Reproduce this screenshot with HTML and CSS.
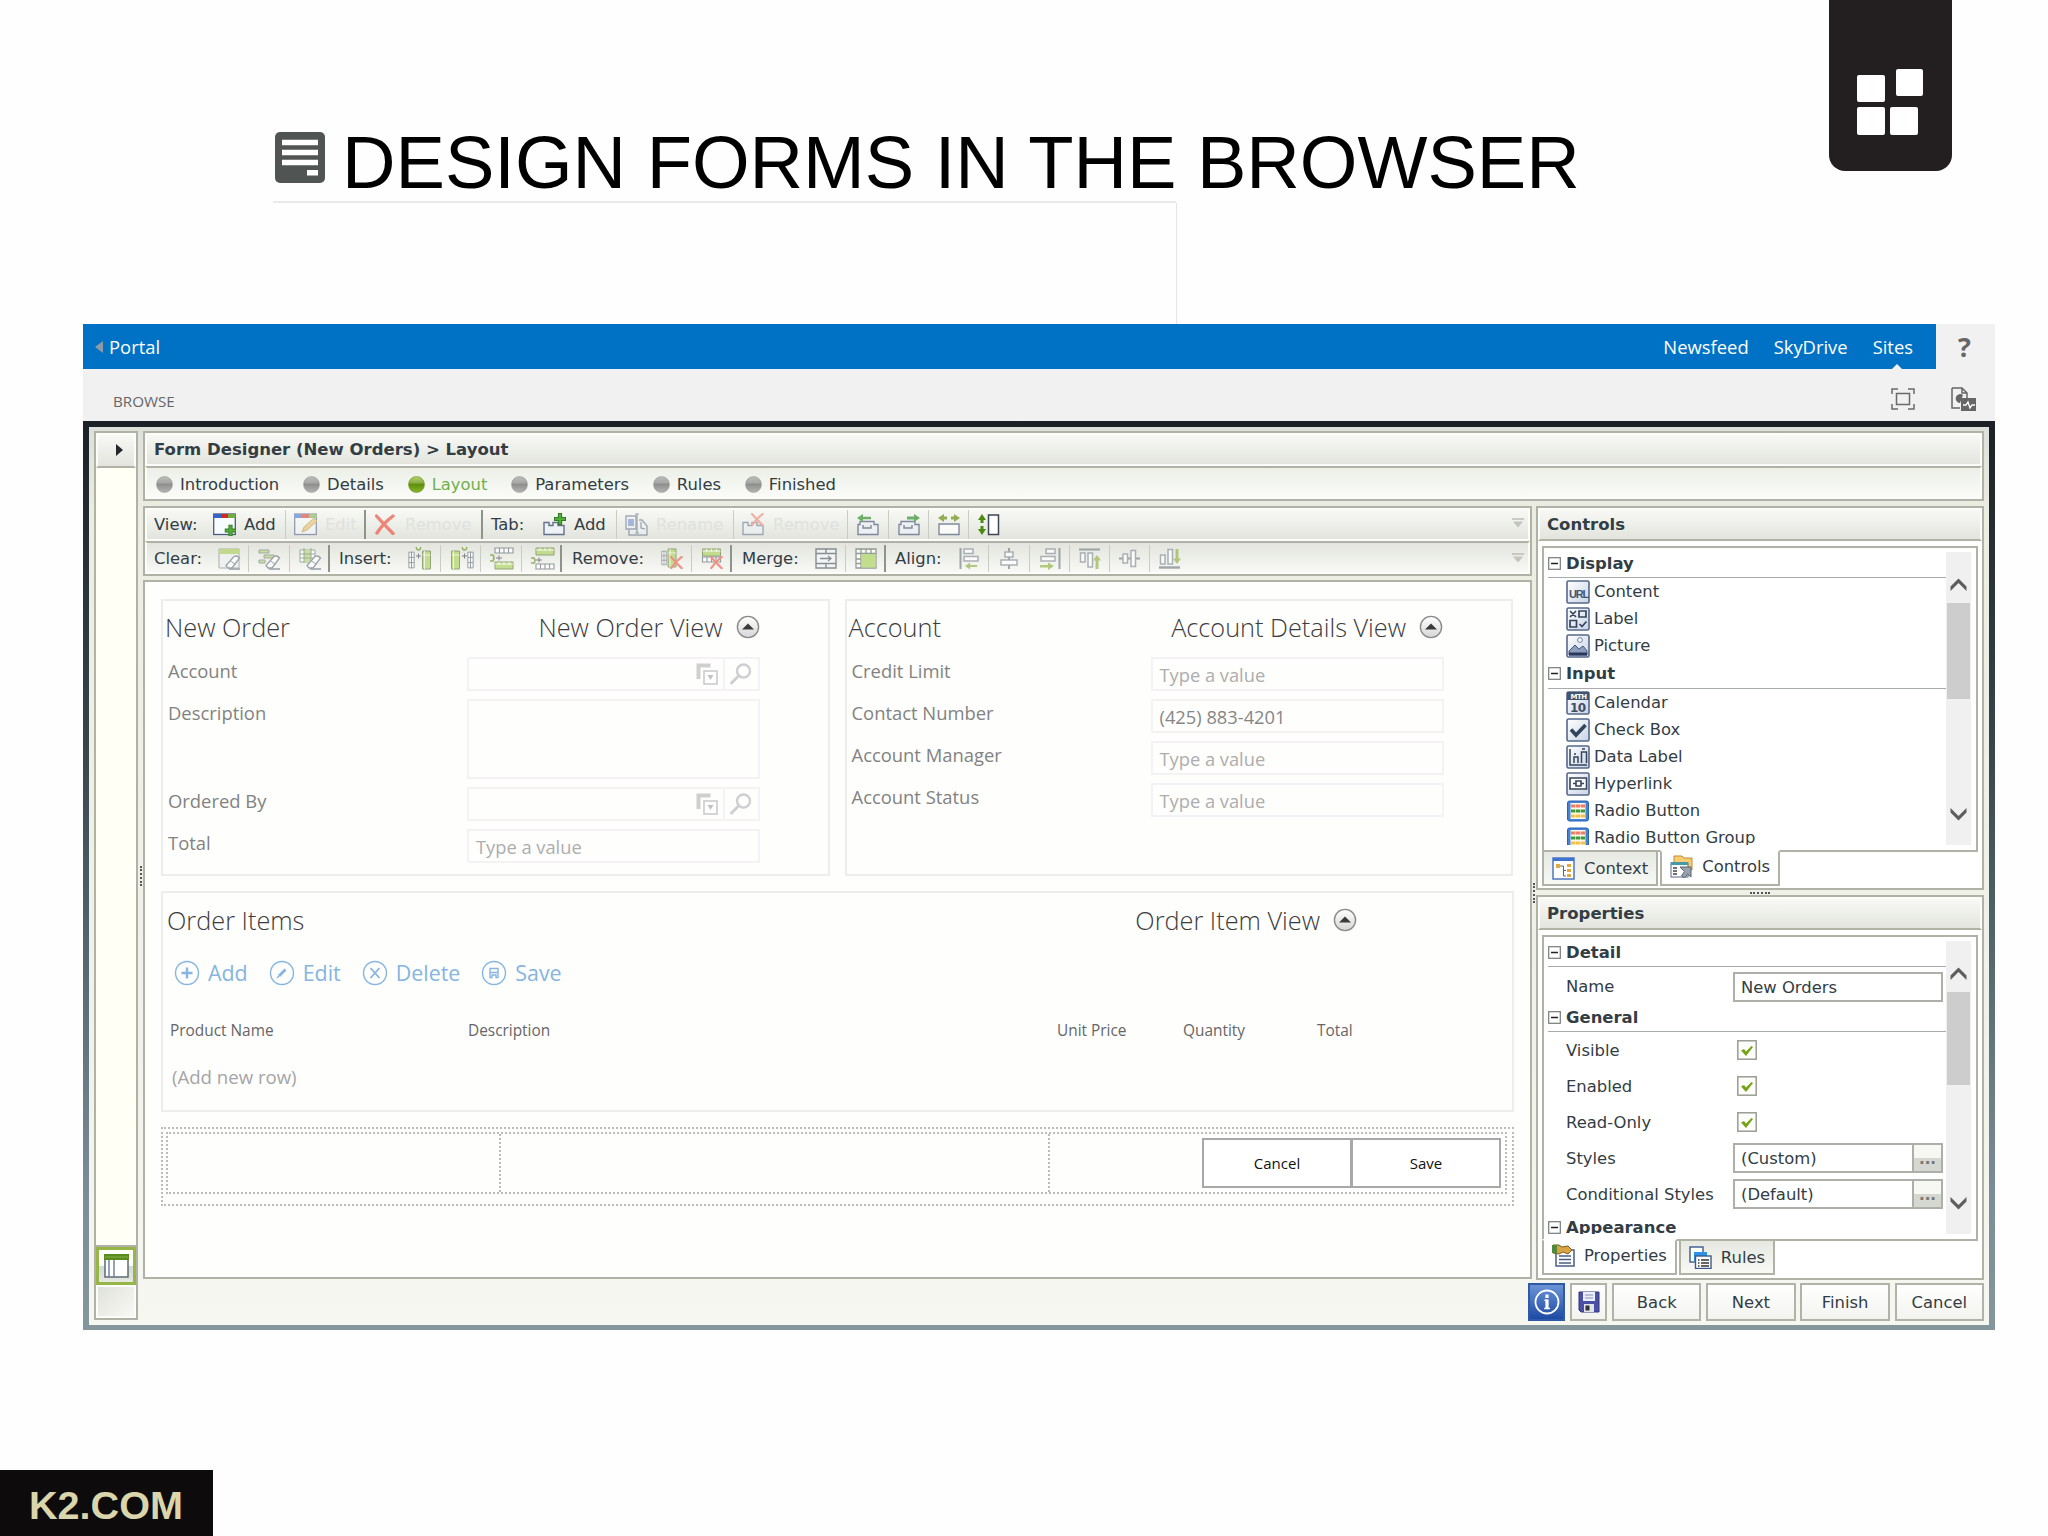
FILE: index.html
```
<!DOCTYPE html>
<html lang="en">
<head>
  <meta charset="UTF-8" />
  <meta name="viewport" content="width=device-width, initial-scale=1.0"/>
  <title>Design Forms in the Browser</title>
  <link rel="stylesheet" href="styles.css">
</head>
<body>
  <!-- shared icons -->
  <svg class="sprite" xmlns="http://www.w3.org/2000/svg">
    <defs>
      <linearGradient id="grey-ball" x1="0" y1="0" x2="0" y2="1"><stop offset="0" stop-color="#adadab"/><stop offset=".5" stop-color="#8f8f8d"/><stop offset="1" stop-color="#b4b4b2"/></linearGradient>
      <linearGradient id="green-ball" x1="0" y1="0" x2="0" y2="1"><stop offset="0" stop-color="#a3c54a"/><stop offset=".5" stop-color="#5f8f0c"/><stop offset="1" stop-color="#86b52c"/></linearGradient>
      <linearGradient id="round" x1="0" y1="0" x2="0" y2="1"><stop offset="0" stop-color="#fff"/><stop offset="1" stop-color="#d6d6d6"/></linearGradient>
      <linearGradient id="tile" x1="0" y1="0" x2="1" y2="1"><stop offset="0" stop-color="#fff"/><stop offset="1" stop-color="#c9d4e6"/></linearGradient>
    </defs>
    <symbol id="ball" viewBox="0 0 17 17"><circle cx="8.5" cy="8.5" r="8" fill="url(#grey-ball)" stroke="#a2a29f" stroke-width=".6"/><path d="M1.5 7.5a7 6.5 0 0 1 14 0z" fill="#fff" opacity=".18"/></symbol>
    <symbol id="ball-on" viewBox="0 0 17 17"><circle cx="8.5" cy="8.5" r="8" fill="url(#green-ball)" stroke="#6f9a20" stroke-width=".6"/><path d="M1.5 7.5a7 6.5 0 0 1 14 0z" fill="#fff" opacity=".2"/></symbol>
    <symbol id="collapse" viewBox="0 0 24 24"><circle cx="12" cy="12" r="10.6" fill="url(#round)" stroke="#8a8a8a" stroke-width="1.4"/><path d="M6 14.5l6-6 6 6z" fill="#3a3a3a"/></symbol>
    <symbol id="lookup" viewBox="0 0 22 22"><path d="M2.5 16V2.5h12" fill="none" stroke="#cfcfd1" stroke-width="4"/><rect x="8" y="8" width="13" height="13" fill="#fff" stroke="#cbcbcd" stroke-width="1.6"/><path d="M11.5 12h6l-3 5z" fill="#c2c2c4"/></symbol>
    <symbol id="search" viewBox="0 0 22 22"><circle cx="13.5" cy="8" r="6.5" fill="none" stroke="#cfcfd1" stroke-width="2.4"/><path d="M9 12.5L1.5 20" stroke="#cfcfd1" stroke-width="3" stroke-linecap="round"/></symbol>
    <symbol id="minus" viewBox="0 0 13 13"><rect x=".7" y=".7" width="11.6" height="11.6" fill="#fff" stroke="#777b7c" stroke-width="1.2"/><path d="M3 6.5h7" stroke="#222" stroke-width="1.5"/></symbol>
    <symbol id="arrow-up" viewBox="0 0 17 14"><path d="M.5 13V8.5L8.5 .5l8 8V13l-8-8z" fill="#5d5d5d"/></symbol>
    <symbol id="arrow-down" viewBox="0 0 17 14"><path d="M.5 1v4.500l8 8 8-8V1l-8 8z" fill="#5d5d5d"/></symbol>
    <symbol id="overflow" viewBox="0 0 12 10"><path d="M0 1h12" stroke="#bcbcb4" stroke-width="1.5"/><path d="M1 3.5h10L6 9.500z" fill="#c4c4bc"/></symbol>
    <symbol id="check" viewBox="0 0 20 20"><rect x=".8" y=".8" width="18.4" height="18.4" fill="#fdfdf9" stroke="#9a9d94" stroke-width="1.5"/><path d="M4 10.500l3-1.500 2 2.500 5.500-5.500 1.500 1-7 9z" fill="#74a31a"/></symbol>
    <symbol id="view" viewBox="0 0 23 23"><rect x=".7" y="1" width="21.6" height="20.5" fill="#f8fbff" stroke="#4a5a80" stroke-width="1.3"/><path d="M0 1h8v4H0z" fill="#3466c8"/><path d="M8 1h7v4H8z" fill="#d02c20"/><path d="M15 1h7.500v4H15z" fill="#6fae3c"/></symbol>
    <symbol id="tab" viewBox="0 0 23 23"><path d="M1 21.500V9.500h5v3h4v-3h5v3h6v9z" fill="#eef2f6" stroke="#66718a" stroke-width="1.4"/></symbol>
    <symbol id="tab-wide" viewBox="0 0 23 23"><path d="M1 21.500V11.500h2v-3h14v3h4v10zM6 12v3h8v-3" fill="#eef2f6" stroke="#66718a" stroke-width="1.4"/></symbol>
    <symbol id="eraser" viewBox="0 0 23 23"><path d="M8 18.500l8-9q3-1.500 5.500 1.500l-7.500 10H10z" fill="#fff" stroke="#87909a" stroke-width="1.3"/><path d="M12.500 14l5 3.500" stroke="#87909a"/><path d="M11 22h11" stroke="#87909a" stroke-width="1.6"/></symbol>
    <symbol id="plus-green" viewBox="0 0 12 12"><path d="M6 0v12M0 6h12" stroke="#2e7d22" stroke-width="4.2"/><path d="M6 1v10M1 6h10" stroke="#55ad3c" stroke-width="2.2"/></symbol>
    <symbol id="cross" viewBox="0 0 20 20"><path d="M1.500 1.500q7 8 16.500 17.500M18 1.500Q8 9 2 18.500" fill="none" stroke="#ee7b6c" stroke-width="3.4" stroke-linecap="round"/></symbol>
    <symbol id="cells-v" viewBox="0 0 8 20"><path d="M1 1h6v18H1zM1 7h6M1 13h6M4 1v18" fill="#fff" stroke="#7d858c" stroke-width="1.1"/></symbol>
    <symbol id="cells-h" viewBox="0 0 20 7"><path d="M1 1h18v5H1zM5.500 1v5M10 1v5M14.500 1v5" fill="#fff" stroke="#7d858c" stroke-width="1.1"/></symbol>
    <symbol id="bar-v" viewBox="0 0 10 20"><path d="M1 1h8v18H1z" fill="#b9d878" stroke="#7d9260"/><path d="M3 1v18M1 5h8" stroke="#eef6dc"/></symbol>
    <symbol id="bar-h" viewBox="0 0 20 9"><path d="M1 1h18v7H1z" fill="#b9d878" stroke="#7d9260"/><path d="M1 3h18M5 1v3M10 1v3M15 1v3" stroke="#f5faea"/></symbol>
    <symbol id="hook" viewBox="0 0 8 8"><path d="M1 0q0 4 3 4t3-4" fill="none" stroke="#84a245" stroke-width="1.8"/></symbol>
    <symbol id="left" viewBox="0 0 14 8"><path d="M14 2.800H6V0L0 4l6 4V5.200h8z"/></symbol>
    <symbol id="tile-box" viewBox="0 0 24 24"><rect x="1" y="1" width="22" height="22" rx="1.5" fill="url(#tile)" stroke="#56688a" stroke-width="1.6"/></symbol>
    <symbol id="abacus" viewBox="0 0 22 22"><rect x=".5" y="1" width="21" height="20" rx="2" fill="#4581d4" stroke="#2c62b4"/><path d="M3.500 3h15v16h-15z" fill="#fdf8ea"/><path d="M4 6h14" stroke="#ef7c66" stroke-width="3"/><path d="M4 11h14" stroke="#3c9a3a" stroke-width="3"/><path d="M4 16h14" stroke="#f3c24c" stroke-width="3"/><path d="M8.500 4v14M13.500 4v14" stroke="#fdf8ea" stroke-width=".6"/></symbol>
  </svg>

  <header class="slide-header">
    <svg class="slide-icon" viewBox="0 0 50 51"><rect width="50" height="51" rx="5" fill="#505452"/><path d="M7 10.500h36M7 20.500h36M7 30.500h36" stroke="#fff" stroke-width="5.500"/><rect x="32" y="38" width="11" height="5.500" fill="#fff"/></svg>
    <h1>DESIGN FORMS IN THE BROWSER</h1>
  </header>
  <div class="slide-rule"></div>
  <div class="logo">
    <svg viewBox="0 0 123 171" width="123" height="171"><g fill="#fff"><rect x="28" y="75" width="28" height="27" rx="2"/><rect x="67" y="69" width="27" height="27" rx="2"/><rect x="28" y="107" width="28" height="28" rx="2"/><rect x="61" y="107" width="28" height="28" rx="2"/></g></svg>
  </div>

  <main class="window">
    <div class="suite-bar">
      <nav class="suite-links">
        <svg class="back-mark" viewBox="0 0 8 12" width="8" height="12"><path d="M8 0v12L0 6z" fill="#8b9aa6"/></svg>
        <span class="portal">Portal</span>
        <span>Newsfeed</span>
        <span>SkyDrive</span>
        <span class="current">Sites</span>
      </nav>
      <div class="help">?</div>
    </div>
    <div class="ribbon">
      <span class="browse">BROWSE</span>
      <svg viewBox="0 0 24 22" width="24" height="22" fill="none" stroke="#6a6a6a" stroke-width="1.5"><path d="M1 6V1h6M17 1h6v5M23 16v5h-6M7 21H1v-5"/><rect x="5.500" y="5.500" width="13" height="11"/></svg>
      <svg viewBox="0 0 25 25" width="25" height="25"><path d="M1 1h10l5 5v5M1 1v20h8M11 1v5h5" fill="none" stroke="#666" stroke-width="1.5"/><path d="M12 8a4.500 4.500 0 1 0-3 8z" fill="#666"/><rect x="10" y="11" width="15" height="13" fill="#666"/><path d="M12 18h3l2-3 2 6 2-3h3" fill="none" stroke="#fff" stroke-width="1.3"/></svg>
    </div>

    <div class="frame">
      <aside class="side">
        <div class="side-head"><svg viewBox="0 0 7 12" width="7" height="12"><path d="M0 0v12l7-6z" fill="#23282c"/></svg></div>
        <div class="side-body"></div>
        <div class="side-tool"><svg viewBox="0 0 25 24" width="25" height="24"><rect x="1" y="1" width="23" height="22" fill="#fff" stroke="#5b6b74" stroke-width="1.5"/><path d="M0 0h25v6H0z" fill="#5a8c1e"/><path d="M1 3h23" stroke="#86ad4c"/><path d="M5 6v17M10 6v17" stroke="#6a7c92" stroke-width="1.4"/></svg></div>
        <div class="side-foot"></div>
      </aside>
      <div class="grip grip-v grip-left"></div>

      <section class="designer">
        <div class="box crumbs">
          <h2 class="bar">Form Designer (New Orders) &gt; Layout</h2>
          <div class="bar steps">
            <span><svg><use href="#ball"/></svg>Introduction</span>
            <span><svg><use href="#ball"/></svg>Details</span>
            <span class="active"><svg><use href="#ball-on"/></svg>Layout</span>
            <span><svg><use href="#ball"/></svg>Parameters</span>
            <span><svg><use href="#ball"/></svg>Rules</span>
            <span><svg><use href="#ball"/></svg>Finished</span>
          </div>
        </div>

        <div class="workspace">
          <div class="left-col">
            <div class="box toolbars">
              <div class="bar tools tools-view">
                <div><b class="w59">View:</b><svg class="ic"><use href="#view"/><use href="#plus-green" x="11.500" y="11.500" width="12" height="12"/></svg>Add</div>
                <div class="strong off"><svg class="ic"><use href="#view"/><path d="M8 19l2-5L20 5l3 3-10 9z" fill="#eabf62" stroke="#b98e3a"/></svg>Edit</div>
                <div class="strong off"><svg class="ic vivid"><use href="#cross" x="1" y="1" width="20" height="21"/></svg>Remove</div>
                <div><b class="w51">Tab:</b><svg class="ic"><use href="#tab"/><use href="#plus-green" x="11" y="0" width="12" height="12"/></svg>Add</div>
                <div class="off"><svg class="ic"><path d="M1 3h10v13H1zM14 7h3l5 6v9H4v-6" fill="#eef2f6" stroke="#66718a" stroke-width="1.4"/><path d="M3 6h6v7H3z" fill="#6c86cc"/><path d="M12 1v19M10 1h4M10 20h4M16 9v6l4 1" fill="none" stroke="#555f70" stroke-width="1.2"/></svg>Rename</div>
                <div class="off"><svg class="ic"><use href="#tab"/><use href="#cross" x="9" y="0" width="13" height="13"/></svg>Remove</div>
                <div class="dim"><svg class="ic"><use href="#tab-wide"/><use href="#left" x="0" y="1" width="14" height="8" fill="#4da04a"/></svg></div>
                <div class="dim"><svg class="ic"><use href="#tab-wide"/><path d="M9 3.500h7V1l6 4-6 4V6.500H9z" fill="#4da04a"/></svg></div>
                <div class="dim"><svg class="ic"><path d="M1 11h20v10.500H1z" fill="#fff" stroke="#66718a" stroke-width="1.4"/><path d="M9 3.500H6V1L0 5l6 4V6.500h3zM13 3.500h3V1l6 4-6 4V6.500h-3z" fill="#7a9c2c"/></svg></div>
                <div><svg class="ic"><path d="M11.500 2h10v19.500h-10z" fill="#fff" stroke="#3c4656" stroke-width="1.5"/><path d="M5 1l4 6H6.500v3h-3V7H1zM5 22l4-6H6.500v-3h-3v3H1z" fill="#4f8a10"/></svg></div>
                <svg class="more"><use href="#overflow"/></svg>
              </div>
              <div class="bar tools tools-grid">
                <div><b>Clear:</b><svg class="ic"><path d="M1 2h20v19H1z" fill="#eef1f2" stroke="#9aa39c"/><path d="M1 2h20v5H1z" fill="#b9d478"/><use href="#eraser"/></svg></div>
                <div><svg class="ic"><path d="M1 3h10v3H1zM6 8h10v3H6zM1 13h6v3H1z" fill="#c3dd8e" stroke="#8c9a90"/><use href="#eraser"/></svg></div>
                <div class="strong"><svg class="ic"><path d="M1 3h15v12H1z" fill="#fff" stroke="#8c9a90"/><path d="M5 3h7v12H5z" fill="#c3dd8e"/><path d="M1 7h15M1 11h15M5 1v15M12 1v15" stroke="#8c9a90"/><use href="#eraser"/></svg></div>
                <div><b>Insert:</b><svg class="ic wide"><use href="#cells-v" x="0" y="3" width="7" height="20"/><use href="#bar-v" x="13" y="3" width="11" height="20"/><use href="#hook" x="7" y="0" width="7" height="6"/><path d="M8 9h5M10.500 6.500v5" stroke="#667"/></svg></div>
                <div><svg class="ic wide"><use href="#bar-v" x="0" y="3" width="11" height="20"/><use href="#cells-v" x="17" y="3" width="7" height="20"/><use href="#hook" x="11" y="0" width="7" height="6"/><path d="M12 9h5M14.500 6.500v5" stroke="#667"/></svg></div>
                <div><svg class="ic wide"><use href="#cells-h" x="4" y="0" width="20" height="7"/><use href="#bar-h" x="4" y="14" width="20" height="9"/><path d="M0 8h3q2 3 0 6H0" fill="none" stroke="#84a245" stroke-width="1.6"/><path d="M6 11h6M9 8.500v5" stroke="#667"/></svg></div>
                <div class="strong"><svg class="ic wide"><use href="#bar-h" x="4" y="0" width="20" height="9"/><use href="#cells-h" x="4" y="16" width="20" height="7"/><path d="M0 11h3q2 2.500 0 5H0" fill="none" stroke="#84a245" stroke-width="1.6"/><path d="M5 13h6M8 10.500v5" stroke="#667"/></svg></div>
                <div><b>Remove:</b><svg class="ic"><use href="#cells-v" x="0" y="1" width="6" height="20"/><use href="#bar-v" x="6" y="1" width="10" height="20"/><use href="#cross" x="9" y="9" width="13" height="13"/></svg></div>
                <div class="strong"><svg class="ic"><use href="#bar-h" x="0" y="1" width="21" height="9"/><use href="#cells-h" x="0" y="9" width="21" height="7"/><use href="#cross" x="9" y="9" width="13" height="13"/></svg></div>
                <div><b>Merge:</b><svg class="ic"><path d="M1 2h20v19H1zM1 6.500h20M1 16.500h20M11 2v4.500M11 16.500V21" fill="#f4f6f6" stroke="#6e767e" stroke-width="1.4"/><path d="M5 11.500h11M13 9l3 2.500-3 2.500" fill="none" stroke="#6e767e" stroke-width="1.3"/></svg></div>
                <div class="strong"><svg class="ic"><path d="M1 2h20v19H1zM1 6.500h20M6 2v19M1 12h5M1 16.500h5M11 2v4.500M16 2v4.500" fill="#fff" stroke="#7d8780" stroke-width="1.3"/><path d="M6.500 7h14v13.500h-14z" fill="#b7da76"/></svg></div>
                <div><b>Align:</b><svg class="ic"><path d="M1.500 1v21" stroke="#8b9198" stroke-width="2"/><path d="M5 2h9v4.500H5zM5 9.500h14V14H5z" fill="#fff" stroke="#9aa0a8" stroke-width="1.5"/><use href="#left" x="5" y="15.500" width="14" height="7" fill="#a3bd62"/></svg></div>
                <div><svg class="ic"><path d="M11 1v21" stroke="#8b9198" stroke-width="2"/><path d="M7 5h8v5H7zM3 13h16v5H3z" fill="#fff" stroke="#9aa0a8" stroke-width="1.5"/></svg></div>
                <div><svg class="ic"><path d="M20.500 1v21" stroke="#8b9198" stroke-width="2"/><path d="M7 2h9v4.500H7zM2 9.500h14V14H2z" fill="#fff" stroke="#9aa0a8" stroke-width="1.5"/><path d="M1 18h8v-2.500l6 3.500-6 4v-2.500H1z" fill="#a3bd62"/></svg></div>
                <div><svg class="ic"><path d="M0 2.500h21" stroke="#8b9198" stroke-width="2"/><path d="M1.500 6h4.500v9H1.500zM9 6h4.500v14H9z" fill="#fff" stroke="#9aa0a8" stroke-width="1.5"/><path d="M18 8l4 5.500h-2.500V22h-3v-8.500H14z" fill="#a3bd62"/></svg></div>
                <div><svg class="ic"><path d="M0 11.500h21" stroke="#8b9198" stroke-width="2"/><path d="M4 7h4.500v9H4zM12 3.500h4.500v16H12z" fill="#fff" stroke="#9aa0a8" stroke-width="1.5"/></svg></div>
                <div class="last"><svg class="ic"><path d="M0 20.500h21" stroke="#8b9198" stroke-width="2.4"/><path d="M1.500 8h4.500v9H1.500zM9 2.500h4.500V17H9z" fill="#fff" stroke="#9aa0a8" stroke-width="1.5"/><path d="M18 17l4-5.500h-2.500V2h-3v9.500H14z" fill="#a3bd62"/></svg></div>
                <svg class="more"><use href="#overflow"/></svg>
              </div>
            </div>

            <div class="box canvas">
              <div class="views">
                <section class="view">
                  <header><h3>New Order</h3><h3>New Order View</h3><svg><use href="#collapse"/></svg></header>
                  <div class="fields">
                    <label>Account</label><div class="field lookup"><svg><use href="#lookup"/></svg><i><svg><use href="#search"/></svg></i></div>
                    <label>Description</label><div class="field area"></div>
                    <label>Ordered By</label><div class="field lookup"><svg><use href="#lookup"/></svg><i><svg><use href="#search"/></svg></i></div>
                    <label>Total</label><div class="field">Type a value</div>
                  </div>
                </section>
                <section class="view">
                  <header><h3>Account</h3><h3>Account Details View</h3><svg><use href="#collapse"/></svg></header>
                  <div class="fields">
                    <label>Credit Limit</label><div class="field">Type a value</div>
                    <label>Contact Number</label><div class="field filled">(425) 883-4201</div>
                    <label>Account Manager</label><div class="field">Type a value</div>
                    <label>Account Status</label><div class="field">Type a value</div>
                  </div>
                </section>
              </div>

              <section class="view items">
                <header><h3>Order Items</h3><h3>Order Item View</h3><svg><use href="#collapse"/></svg></header>
                <div class="item-actions">
                  <span><svg viewBox="0 0 26 26"><circle cx="13" cy="13" r="11.500"/><path d="M13 7.500v11M7.500 13h11" stroke-width="2.4"/></svg>Add</span>
                  <span><svg viewBox="0 0 26 26"><circle cx="13" cy="13" r="11.500"/><path d="M10 16l6.500-6.500" stroke-width="2.8"/><path d="M8 18l2-2"/></svg>Edit</span>
                  <span><svg viewBox="0 0 26 26"><circle cx="13" cy="13" r="11.500"/><path d="M8.500 8l9 10M17.500 8l-9 10" stroke-width="1.8"/></svg>Delete</span>
                  <span><svg viewBox="0 0 26 26"><circle cx="13" cy="13" r="11.500"/><path d="M9 17.500v-9h8v9h-2v-2.500h-4v2.500zM9 12.500h8"/></svg>Save</span>
                </div>
                <div class="item-head"><span>Product Name</span><span>Description</span><span>Unit Price</span><span>Quantity</span><span>Total</span></div>
                <div class="item-new">(Add new row)</div>
              </section>

              <div class="drop">
                <div class="drop-cells">
                  <div></div><div></div>
                  <div class="drop-buttons"><button>Cancel</button><button>Save</button></div>
                </div>
              </div>
            </div>
          </div>

          <div class="grip grip-v grip-mid"></div>

          <div class="right-col">
            <section class="box panel">
              <h2 class="bar">Controls</h2>
              <div class="list">
                <div class="rows">
                  <h4><svg><use href="#minus"/></svg>Display</h4>
                  <p><svg><use href="#tile-box"/><text x="3" y="18" class="url">URL</text></svg>Content</p>
                  <p><svg><use href="#tile-box"/><path d="M4 4l6 6M10 4l-6 6M13 4h7v6h-7zM4 13.500h6.500v6.500H4zM13.500 17l2.500 2.500 4.500-5" fill="none" stroke="#35455c" stroke-width="1.7"/></svg>Label</p>
                  <p><svg><use href="#tile-box"/><circle cx="14" cy="6" r="2.400" fill="#fff" stroke="#6c7f9e"/><path d="M3 17l6-6 4 4 4-3 4 5v4H3z" fill="#8d9fbd" stroke="#45597c"/><path d="M3 20h18" stroke="#27385a" stroke-width="3"/></svg>Picture</p>
                  <h4 class="second"><svg><use href="#minus"/></svg>Input</h4>
                  <p><svg><use href="#tile-box"/><path d="M1 1h22v8H1z" fill="#40566e"/><text x="4.500" y="7.500" class="mth">MTH</text><text x="4" y="20.500" class="ten">10</text></svg>Calendar</p>
                  <p><svg><use href="#tile-box"/><path d="M5 11.500l5 5.500L19.500 7" fill="none" stroke="#33455a" stroke-width="3.6"/></svg>Check Box</p>
                  <p><svg><use href="#tile-box"/><path d="M4 4v16h17M8 18v-6h4v6M15.500 18V7h5v11M8 9h2M16 4h3" fill="none" stroke="#35455c" stroke-width="1.5"/></svg>Data Label</p>
                  <p><svg><use href="#tile-box"/><path d="M4 6h16.500v11H4z" fill="#fff" stroke="#35455c" stroke-width="1.6"/><path d="M7 11.500h3M15 11.500h3M10 9h5v5h-5z" fill="none" stroke="#35455c" stroke-width="1.6"/></svg>Hyperlink</p>
                  <p><svg><use href="#abacus" x="1" y="1" width="22" height="22"/></svg>Radio Button</p>
                  <p><svg><use href="#abacus" x="1" y="1" width="22" height="22"/></svg>Radio Button Group</p>
                </div>
                <div class="scroll"><svg><use href="#arrow-up"/></svg><i></i><svg><use href="#arrow-down"/></svg></div>
              </div>
              <div class="tabs">
                <span><svg viewBox="0 0 23 23"><rect x="1" y="1" width="21" height="21" fill="#fff" stroke="#4f77c0" stroke-width="1.5"/><path d="M1 2.500h21" stroke="#3f73d0" stroke-width="3"/><path d="M4 7h4v4H4zM15 7h4v3h-4zM15 12h4v3h-4zM15 17h4v3h-4z" fill="#e3a83e"/><path d="M8 9h3.500v10H14M11.500 13.500H14" fill="none" stroke="#666"/></svg>Context</span>
                <span class="on"><svg viewBox="0 0 23 23"><path d="M4 1h8l2 2h8v12H4z" fill="#f7cd74" stroke="#c28a34"/><rect x="1" y="8" width="17" height="14" fill="#fff" stroke="#56688a"/><path d="M1 8.500h17" stroke="#49a" stroke-width="3"/><path d="M3 13h4M3 16h4M3 19h4" stroke="#444" stroke-width="1.5"/><path d="M10 12h11v10l-3.500-3-3 4-3-2 3-4.500z" fill="#9aa2ad" stroke="#5c6470"/></svg>Controls</span>
              </div>
            </section>

            <div class="grip grip-h"></div>

            <section class="box panel props">
              <h2 class="bar">Properties</h2>
              <div class="list">
                <div class="rows">
                  <h4><svg><use href="#minus"/></svg>Detail</h4>
                  <div class="prop name"><label>Name</label><span class="input">New Orders</span></div>
                  <h4><svg><use href="#minus"/></svg>General</h4>
                  <div class="prop"><label>Visible</label><svg><use href="#check"/></svg></div>
                  <div class="prop"><label>Enabled</label><svg><use href="#check"/></svg></div>
                  <div class="prop"><label>Read-Only</label><svg><use href="#check"/></svg></div>
                  <div class="prop"><label>Styles</label><span class="input">(Custom)<i>...</i></span></div>
                  <div class="prop"><label>Conditional Styles</label><span class="input">(Default)<i>...</i></span></div>
                  <h4 class="cut"><svg><use href="#minus"/></svg>Appearance</h4>
                </div>
                <div class="scroll"><svg><use href="#arrow-up"/></svg><i></i><svg><use href="#arrow-down"/></svg></div>
              </div>
              <div class="tabs">
                <span class="on first"><svg viewBox="0 0 23 23"><rect x="4" y="6" width="18" height="16" fill="#fff" stroke="#4a5d86" stroke-width="1.5"/><path d="M7 12h12M7 15.500h12M7 19h12" stroke="#4a5d86" stroke-width="1.4"/><path d="M1 1h6l3 2 6-1 4 4-4 4-5-2-4 2-6-1z" fill="#d9a441" stroke="#7a5f1c"/><path d="M0 1h5v8H0z" fill="#4e8b3c"/></svg>Properties</span>
                <span><svg viewBox="0 0 23 23"><rect x="1" y="1" width="13" height="15" fill="#fff" stroke="#3c5a8c" stroke-width="1.4"/><path d="M5 6h13v9H5z" fill="#2a93e8"/><rect x="6.500" y="10" width="15.500" height="12.500" fill="#fff" stroke="#3c5a8c" stroke-width="1.4"/><path d="M9 14h1.500M12 14h8M9 17h1.500M12 17h8M9 20h1.500M12 20h8" stroke="#333" stroke-width="1.3"/></svg>Rules</span>
              </div>
            </section>
          </div>
        </div>

        <div class="wizard">
          <button class="info"><svg viewBox="0 0 26 26" width="26" height="26"><circle cx="13" cy="13" r="11.500" fill="none" stroke="#fff" stroke-width="1.8"/><path d="M13 5.500v3.500M13 10.500v9.500" stroke="#fff" stroke-width="3.2"/><path d="M10.500 11.300h2.500M10.200 19.500h5.800" stroke="#fff" stroke-width="1.6"/></svg></button>
          <button class="disk"><svg viewBox="0 0 22 22" width="22" height="22"><path d="M1 1h20v20H3l-2-2z" fill="#4c4fa6" stroke="#33367c"/><path d="M5 1h12v9H5z" fill="#eceefa"/><path d="M7 4h8M7 7h8" stroke="#8a8cc0"/><path d="M6 13h10v8H6z" fill="#dfe3ea"/><path d="M7.500 14.500h4v5h-4z" fill="#333"/></svg></button>
          <button>Back</button>
          <button>Next</button>
          <button>Finish</button>
          <button>Cancel</button>
        </div>
      </section>
    </div>
  </main>

  <footer class="slide-footer">K2.COM</footer>
</body>
</html>
```
FILE: styles.css
```
* {
  box-sizing: border-box;
}

body {
  margin: 0;
  width: 2048px;
  height: 1536px;
  overflow: hidden;
  display: flex;
  flex-direction: column;
  background: #fefefe;
  font-family: "DejaVu Sans", Verdana, sans-serif;
  font-size: 16.4px;
  color: #333d44;
}

h1, h2, h3, h4, p {
  margin: 0;
}

svg {
  display: block;
  flex: none;
}

.sprite {
  position: absolute;
  width: 0;
  height: 0;
}

/* slide header */
.slide-header {
  display: flex;
  width: 903px;
  height: 203px;
  margin-left: 273px;
  padding: 121px 0 0 2px;
  border-bottom: 2px solid #e9e9e9;
}

.slide-icon {
  width: 50px;
  height: 51px;
  margin-top: 11px;
}

.slide-header h1 {
  margin-left: 17px;
  font: 400 74.1px/84px "Liberation Sans", Arial, sans-serif;
  color: #000;
  white-space: nowrap;
}

.slide-rule {
  width: 904px;
  height: 121px;
  margin-left: 273px;
  border-right: 1px solid #e4e4e4;
}

.logo {
  position: absolute;
  top: 0;
  left: 1829px;
  width: 123px;
  height: 171px;
  background: #231f20;
  border-radius: 0 0 16px 16px;
}

.slide-footer {
  width: 213px;
  height: 66px;
  margin-top: auto;
  padding-left: 29px;
  background: #0d0b0c;
  font: 700 39.6px/70px "Liberation Sans", Arial, sans-serif;
  color: #dbd5ab;
}

/* window */
.window {
  width: 1912px;
  margin-left: 83px;
}

.suite-bar {
  display: flex;
  height: 45px;
  background: #f1f1f2;
  font: 18.4px/47px "Open Sans", sans-serif;
}

.suite-links {
  display: flex;
  align-items: center;
  width: 1853px;
  padding: 0 23px 0 12px;
  gap: 25px;
  background: #0072c6;
  color: #fff;
}

.back-mark {
  margin-right: -19px;
}

.portal {
  margin-right: auto;
}

.current {
  position: relative;
}

.current::after {
  content: "";
  position: absolute;
  left: 19px;
  bottom: 1px;
  border: 5px solid transparent;
  border-top: 0;
  border-bottom-color: #f1f1f2;
}

.help {
  width: 59px;
  padding-right: 2px;
  text-align: center;
  font: 700 27px/46px "Open Sans", sans-serif;
  color: #666;
}

.ribbon {
  display: flex;
  align-items: center;
  height: 52px;
  padding: 8px 19px 0 30px;
  gap: 36px;
  background: #f1f1f2;
}

.browse {
  margin: 4px auto 0 0;
  font: 15.2px "Open Sans", sans-serif;
  color: #666;
}

.frame {
  display: flex;
  height: 909px;
  padding: 4px 5px 4px;
  border: 6px solid #1d2227;
  border-image: linear-gradient(#1c2127, #36454c 35%, #7b8d96 85%, #84979c) 6;
  border-bottom-width: 5px;
  background: linear-gradient(#dde0d9, #eceee2 10%, #f1f2ea 70%, #f6f7f0);
}

.box {
  border: 2px solid #afb2a5;
  background: #fff;
}

.bar {
  display: flex;
  align-items: center;
  height: 33px;
  padding-left: 10px;
  border: 2px solid #fcfdfa;
  background: linear-gradient(#f8f9f5, #e2e4dd);
}

h2 {
  font-size: 16.5px;
  line-height: 20px;
}

/* collapsed side pane */
.side {
  display: flex;
  flex-direction: column;
  width: 44px;
  height: 889px;
  border: 2px solid #afb2a5;
  background: #fffff6;
}

.side-head {
  height: 35px;
  padding: 9px 0 0 18px;
  border: 2px solid #fcfdfa;
  border-bottom: 2px solid #afb2a5;
  background: linear-gradient(#f8f9f5, #e2e4dd);
}

.side-body {
  flex: 1;
  border-bottom: 2px solid #afb2a5;
}

.side-tool {
  height: 38px;
  padding: 4px 5px;
  border: 3px solid #96b648;
  background: linear-gradient(#fdfefa 50%, #d3d8d3 50%, #e6e9e2);
}

.side-foot {
  height: 33px;
  border: 2px solid #fcfdfa;
  background: linear-gradient(135deg, #dfe2da, #f8f9f4);
}

.grip-v {
  align-self: center;
  width: 2px;
  height: 20px;
  border-left: 2px dotted #555;
}

.grip-left {
  margin: 0 1px 0 2px;
}

.grip-mid {
  margin: 0 1px 0 1px;
}

.grip-h {
  width: 20px;
  margin: 2px auto 1px;
  border-top: 2px dotted #555;
}

.designer {
  width: 1841px;
}

.crumbs {
  height: 70px;
}

.crumbs h2 {
  padding-left: 7px;
}

.steps {
  gap: 23.800px;
  padding: 4px 0 0 9px;
  border-top-color: #afb2a5;
  background: linear-gradient(#eceee8, #fbfcf8);
}

.steps span {
  display: flex;
  align-items: center;
  gap: 7px;
}

.steps svg {
  width: 17px;
  height: 17px;
}

.steps .active {
  color: #70b04c;
}

.workspace {
  display: flex;
  height: 773px;
  margin-top: 5px;
}

.left-col {
  width: 1389px;
}

/* toolbars */
.toolbars {
  height: 70px;
  margin-bottom: 4px;
}

.tools {
  display: grid;
  height: 33px;
  padding: 0;
  align-items: stretch;
}

.tools-view {
  grid-template-columns: 139px 80px 117px 134px 117px 114px 41px 40px 40px 1fr 16px;
}

.tools-grid {
  grid-template-columns: 102px 41px 40px 111px 40px 41px 40px 130px 40px 114px 40px 103px 41px 40px 40px 40px 1fr 16px;
  padding-top: 2px;
  border-top-color: #afb2a5;
  background: linear-gradient(#e2e4dd, #f8f9f5);
}

.tools div {
  display: flex;
  align-items: center;
  gap: 8px;
  padding-left: 8px;
  border-right: 1px solid #c9ccc2;
  white-space: nowrap;
}

.tools-view div:first-child {
  padding-left: 7px;
}

.tools-view .dim {
  padding-left: 9px;
}

.tools-view div:nth-last-child(2),
.tools .last {
  border-right: 0;
}

.tools b {
  font-weight: 400;
}

.tools-grid b {
  margin-right: auto;
}

.tools-grid div {
  padding: 0 7px 0 9px;
}

.tools-grid div:first-child {
  padding-left: 7px;
}

.tools-grid div:nth-child(8),
.tools-grid div:nth-child(10) {
  padding-left: 10px;
}

.tools-grid div:nth-child(n + 12) {
  padding-right: 6px;
}

.w59 {
  width: 51px;
}

.w51 {
  width: 44px;
}

.tools .strong {
  border-right: 2px solid #8f948a;
}

.off {
  color: #dfe1de;
}

.off svg {
  opacity: .55;
}

.off .vivid {
  opacity: .9;
}

.dim svg,
.tools-grid .ic {
  opacity: .8;
}

.ic {
  width: 23px;
  height: 23px;
}

.wide {
  width: 25px;
}

.more {
  width: 12px;
  height: 10px;
  margin-top: 8px;
}

/* form canvas */
.canvas {
  height: 699px;
  padding: 17px 17px 0 16px;
  background: #fefefd;
}

.views {
  display: flex;
  gap: 15px;
  height: 277px;
}

.view {
  width: 669px;
  border: 2px solid #ededec;
}

.view header {
  display: flex;
  align-items: center;
  height: 56px;
  padding: 0 68px 5px 2px;
}

h3 {
  font: 300 25.3px/34px "Open Sans", sans-serif;
  color: #3c3c40;
}

h3:first-child {
  margin-right: auto;
}

.view header svg {
  width: 24px;
  height: 24px;
  margin-left: 13px;
}

.fields {
  display: grid;
  grid-template-columns: 304px 293px;
  row-gap: 8px;
  font: 18.4px/28px "Open Sans", sans-serif;
  color: #828282;
}

.fields label {
  padding-left: 5px;
}

.field {
  height: 34px;
  padding: 0 0 0 7px;
  border: 2px solid #f4f2f5;
  font-size: 18.3px;
  line-height: 31px;
  color: #adadad;
}

.filled {
  color: #868686;
}

.area {
  height: 80px;
}

.lookup {
  display: flex;
  align-items: center;
  justify-content: flex-end;
  padding: 0;
}

.lookup svg {
  width: 22px;
  height: 22px;
}

.lookup i {
  display: flex;
  align-items: center;
  height: 30px;
  margin-left: 5px;
  padding: 0 6px 0 5px;
  border-left: 2px solid #f4f2f5;
}

.items {
  width: 1353px;
  height: 221px;
  margin-top: 15px;
}

.items header {
  padding: 0 155px 4px 4px;
  height: 57px;
}

.item-actions {
  display: flex;
  gap: 21px;
  height: 46px;
  padding-left: 11px;
  align-items: center;
  font: 21.4px/44px "Open Sans", sans-serif;
  color: #85b5e0;
}

.item-actions span {
  display: flex;
  align-items: center;
  gap: 8px;
}

.item-actions svg {
  width: 26px;
  height: 26px;
  fill: none;
  stroke: #85b5e0;
  stroke-width: 1.4;
}

.item-head {
  display: grid;
  grid-template-columns: 298px 589px 126px 134px 100px;
  padding: 23px 0 0 7px;
  font: 15.4px/24px "Open Sans", sans-serif;
  color: #666;
}

.item-new {
  padding: 21px 0 0 9px;
  font: 18.6px/26px "Open Sans", sans-serif;
  color: #a5a5a5;
}

.drop {
  width: 1353px;
  height: 79px;
  margin-top: 15px;
  padding: 3px 5px 0 3px;
  border: 2px dotted #bbb;
}

.drop-cells {
  display: grid;
  grid-template-columns: 331px 549px 1fr;
  height: 62px;
  border: 2px dotted #bbb;
}

.drop-cells > div + div {
  border-left: 2px dotted #bbb;
}

.drop-buttons {
  display: flex;
  justify-content: flex-end;
  padding: 4px 4px 0 0;
}

.drop-buttons button {
  width: 150px;
  height: 50px;
  border: 2px solid #a8a8a8;
  background: #fff;
  font: 15px "Open Sans", sans-serif;
  color: #111;
}

.drop-buttons button + button {
  margin-left: -1px;
}

/* right panels */
.right-col {
  width: 448px;
}

.panel {
  height: 384px;
}

.props {
  height: 385px;
}

.panel .bar {
  height: 33px;
  border-bottom: 2px solid #afb2a5;
  padding-left: 7px;
}

.list {
  display: flex;
  width: 436px;
  height: 306px;
  margin: 5px 0 0 4px;
  padding: 4px 5px 5px 4px;
  border: 2px solid #afb2a5;
}

.rows {
  width: 399px;
  height: 293px;
  overflow: hidden;
}

.rows h4 {
  display: flex;
  align-items: center;
  gap: 5px;
  height: 26px;
  padding-bottom: 2px;
  border-bottom: 1px solid #a7abad;
  font-size: 16.45px;
}

.rows h4 svg {
  width: 13px;
  height: 13px;
}

.rows .second {
  height: 30px;
  padding-bottom: 1px;
}

.rows p {
  display: flex;
  align-items: center;
  gap: 4px;
  height: 27px;
  padding-left: 18px;
}

.rows p svg {
  width: 24px;
  height: 24px;
}

.url {
  font: 700 11px "Liberation Sans", sans-serif;
  letter-spacing: -1.2px;
  fill: #45566e;
}

.mth {
  font: 700 7px "DejaVu Sans", sans-serif;
  letter-spacing: -.5px;
  fill: #fff;
}

.ten {
  font: 700 12px "DejaVu Sans", sans-serif;
  letter-spacing: -.6px;
  fill: #3d4e66;
}

.scroll {
  display: flex;
  flex-direction: column;
  align-items: center;
  width: 25px;
  height: 293px;
  padding: 26px 0 24px;
  background: #f0f0f1;
}

.scroll svg {
  width: 17px;
  height: 14px;
}

.scroll i {
  width: 23px;
  height: 96px;
  margin: 11px 0 auto;
  background: #cdcdce;
}

.props .scroll i {
  height: 93px;
}

.tabs {
  display: flex;
  gap: 2px;
  margin: -2px 0 0 4px;
}

.tabs span {
  display: flex;
  align-items: center;
  gap: 9px;
  height: 36px;
  padding: 0 8px;
  border: 2px solid #afb2a5;
  background: linear-gradient(#e6e8e1, #f8f9f5);
}

.tabs .on {
  padding-bottom: 3px;
  border-top-color: #fff;
  background: #fff;
}

.tabs svg {
  width: 23px;
  height: 23px;
}

.prop {
  display: flex;
  align-items: center;
  height: 36px;
  padding-left: 18px;
}

.prop.name {
  height: 39px;
}

.prop label {
  width: 167px;
}

.prop > svg {
  width: 20px;
  height: 20px;
  margin-left: 4px;
}

.input {
  display: flex;
  width: 210px;
  height: 30px;
  padding-left: 6px;
  border: 2px solid #adb0a8;
  line-height: 28px;
  background: #fff;
}

.input i {
  width: 29px;
  margin-left: auto;
  border-left: 2px solid #adb0a8;
  background: linear-gradient(#f7f8f4 50%, #d5d8d0 50%);
  text-align: center;
  font: 700 15px/28px "DejaVu Sans", sans-serif;
  color: #777;
}

.rows .cut {
  height: 28px;
  padding: 3px 0 0;
}

/* wizard buttons */
.wizard {
  display: flex;
  justify-content: flex-end;
  gap: 4.8px;
  margin-top: 4px;
}

.wizard button {
  width: 89.4px;
  height: 38px;
  padding: 0;
  border: 2px solid #b0b3a8;
  background: linear-gradient(#fff, #f3f4ef);
  font: 16.4px "DejaVu Sans", sans-serif;
  color: #333d44;
}

.wizard .info,
.wizard .disk {
  display: flex;
  align-items: center;
  justify-content: center;
  width: 37px;
}

.wizard .info {
  border-color: #2f5aa8;
  background: linear-gradient(#6a93d6, #1e4aa4);
}
```
